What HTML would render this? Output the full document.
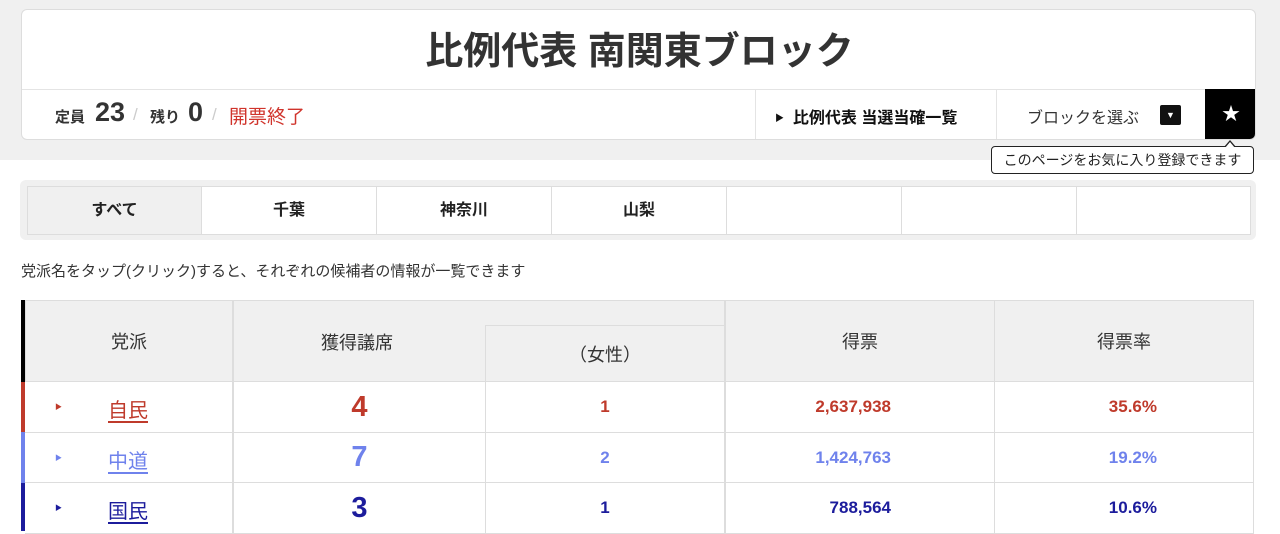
<!DOCTYPE html>
<html><head><meta charset="utf-8"><style>
*{margin:0;padding:0;box-sizing:border-box}
body{width:1280px;height:531px;overflow:hidden;background:#fff;font-family:"Liberation Sans","Noto Sans CJK JP",sans-serif;color:#333;position:relative}
.a{position:absolute}
.band{left:0;top:0;width:1280px;height:160px;background:#f0f0f0}
.card{left:21px;top:9px;width:1235px;height:131px;background:#fff;border:1px solid #ddd;border-radius:6px;overflow:hidden}
.title{left:0;top:17px;width:1235px;text-align:center;font-size:38px;font-weight:bold;color:#333;line-height:50px}
.hl{left:0;top:79px;width:1235px;height:1px;background:#e4e4e4}
.vl{top:80px;width:1px;height:50px;background:#e4e4e4}
.star{left:1183px;top:79px;width:52px;height:51px;background:#000;border-bottom-right-radius:6px;color:#fff;text-align:center;line-height:51px;font-size:18px}
.tip{left:991px;top:146px;width:263px;height:28px;border:1px solid #222;border-radius:4px;background:#fff;font-size:14px;line-height:26px;text-align:center;color:#222}
.tabs{left:20px;top:180px;width:1236px;height:60px;background:#f0f0f0;border-radius:6px}
.tab{top:186px;height:49px;background:#fff;border:1px solid #ddd;text-align:center;line-height:47px;font-size:16px;font-weight:bold;color:#222}
.note{left:21px;top:260px;font-size:15px;color:#333}
.c{position:absolute;border:1px solid #ddd;display:flex;align-items:center;justify-content:center}
.h{background:#f0f0f0;font-size:18px;color:#333}
.r{justify-content:flex-end}
.b{font-weight:bold}
.red{color:#bf3a2b}.blu{color:#6f82ec}.nav{color:#1c1c9c}
.pn{position:absolute;left:108px;font-size:20px;text-decoration:underline;text-underline-offset:4px}
.tri{position:absolute;left:55px;font-size:7px}
.s{position:absolute;white-space:nowrap}
</style></head><body>
<div class="a band"></div>
<div class="a card">
 <div class="a title">比例代表 南関東ブロック</div>
 <div class="a hl"></div>
 <div class="s" style="left:33px;top:96px;font-size:15px;font-weight:bold">定員</div>
 <div class="s" style="left:73px;top:87px;font-size:27px;font-weight:bold">23</div>
 <div class="s" style="left:111px;top:95px;font-size:17px;color:#ccc">/</div>
 <div class="s" style="left:128px;top:96px;font-size:15px;font-weight:bold">残り</div>
 <div class="s" style="left:166px;top:87px;font-size:27px;font-weight:bold">0</div>
 <div class="s" style="left:190px;top:95px;font-size:17px;color:#ccc">/</div>
 <div class="s" style="left:207px;top:92px;font-size:19px;color:#d0342c">開票終了</div>
 <div class="a vl" style="left:733px"></div>
 <div class="a vl" style="left:974px"></div>
 <div class="a" style="left:753px;top:94px;font-size:16px;font-weight:bold;color:#111"><span style="font-size:9px;vertical-align:2px">▶</span>&nbsp; 比例代表 当選当確一覧</div>
 <div class="a" style="left:1005px;top:94px;font-size:16px;color:#333">ブロックを選ぶ</div>
 <div class="a" style="left:1138px;top:95px;width:21px;height:20px;background:#111;border-radius:2px;color:#fff;font-size:9px;text-align:center;line-height:20px">▼</div>
 <div class="a star">★</div>
</div>
<div class="a" style="left:1224px;top:140px;width:0;height:0;border-left:6px solid transparent;border-right:6px solid transparent;border-bottom:7px solid #222"></div>
<div class="a tip">このページをお気に入り登録できます</div>
<div class="a" style="left:1225px;top:142px;width:0;height:0;border-left:5px solid transparent;border-right:5px solid transparent;border-bottom:6px solid #fff"></div>
<div class="a tabs"></div>
<div class="a tab" style="left:27px;width:175px;background:#f0f0f0">すべて</div>
<div class="a tab" style="left:201px;width:176px">千葉</div>
<div class="a tab" style="left:376px;width:176px">神奈川</div>
<div class="a tab" style="left:551px;width:176px">山梨</div>
<div class="a tab" style="left:726px;width:176px"></div>
<div class="a tab" style="left:901px;width:176px"></div>
<div class="a tab" style="left:1076px;width:175px"></div>
<div class="a note">党派名をタップ(クリック)すると、それぞれの候補者の情報が一覧できます</div>

<div class="a" style="left:21px;top:300px;width:4px;height:82px;background:#000"></div>
<div class="a" style="left:21px;top:382px;width:4px;height:50px;background:#bf3a2b"></div>
<div class="a" style="left:21px;top:432px;width:4px;height:51px;background:#6f82ec"></div>
<div class="a" style="left:21px;top:483px;width:4px;height:48px;background:#1c1c9c"></div>

<div class="c h" style="left:25px;top:300px;width:208px;height:82px">党派</div>
<div class="c h" style="left:233px;top:300px;width:492px;height:82px;align-items:flex-start;justify-content:flex-start;padding:28px 0 0 87px">獲得議席</div>
<div class="c h" style="left:485px;top:325px;width:240px;height:57px">（女性）</div>
<div class="c h" style="left:725px;top:300px;width:270px;height:82px">得票</div>
<div class="c h" style="left:994px;top:300px;width:260px;height:82px">得票率</div>

<div class="c" style="left:25px;top:381px;width:208px;height:52px;border-left:none"></div>
<div class="tri red" style="top:402px">▶</div><div class="pn red" style="top:394px">自民</div>
<div class="c b red" style="left:233px;top:381px;width:253px;height:52px;font-size:29px">4</div>
<div class="c b red" style="left:485px;top:381px;width:240px;height:52px;font-size:17px">1</div>
<div class="c b red r" style="left:725px;top:381px;width:270px;height:52px;font-size:17px;padding-right:103px">2,637,938</div>
<div class="c b red r" style="left:994px;top:381px;width:260px;height:52px;font-size:17px;padding-right:96px">35.6%</div>

<div class="c" style="left:25px;top:432px;width:208px;height:51px;border-left:none"></div>
<div class="tri blu" style="top:453px">▶</div><div class="pn blu" style="top:445px">中道</div>
<div class="c b blu" style="left:233px;top:432px;width:253px;height:51px;font-size:29px">7</div>
<div class="c b blu" style="left:485px;top:432px;width:240px;height:51px;font-size:17px">2</div>
<div class="c b blu r" style="left:725px;top:432px;width:270px;height:51px;font-size:17px;padding-right:103px">1,424,763</div>
<div class="c b blu r" style="left:994px;top:432px;width:260px;height:51px;font-size:17px;padding-right:96px">19.2%</div>

<div class="c" style="left:25px;top:482px;width:208px;height:52px;border-left:none"></div>
<div class="tri nav" style="top:503px">▶</div><div class="pn nav" style="top:495px">国民</div>
<div class="c nav b" style="left:233px;top:482px;width:253px;height:52px;font-size:29px">3</div>
<div class="c nav b" style="left:485px;top:482px;width:240px;height:52px;font-size:17px">1</div>
<div class="c nav b r" style="left:725px;top:482px;width:270px;height:52px;font-size:17px;padding-right:103px">788,564</div>
<div class="c nav b r" style="left:994px;top:482px;width:260px;height:52px;font-size:17px;padding-right:96px">10.6%</div>
</body></html>
